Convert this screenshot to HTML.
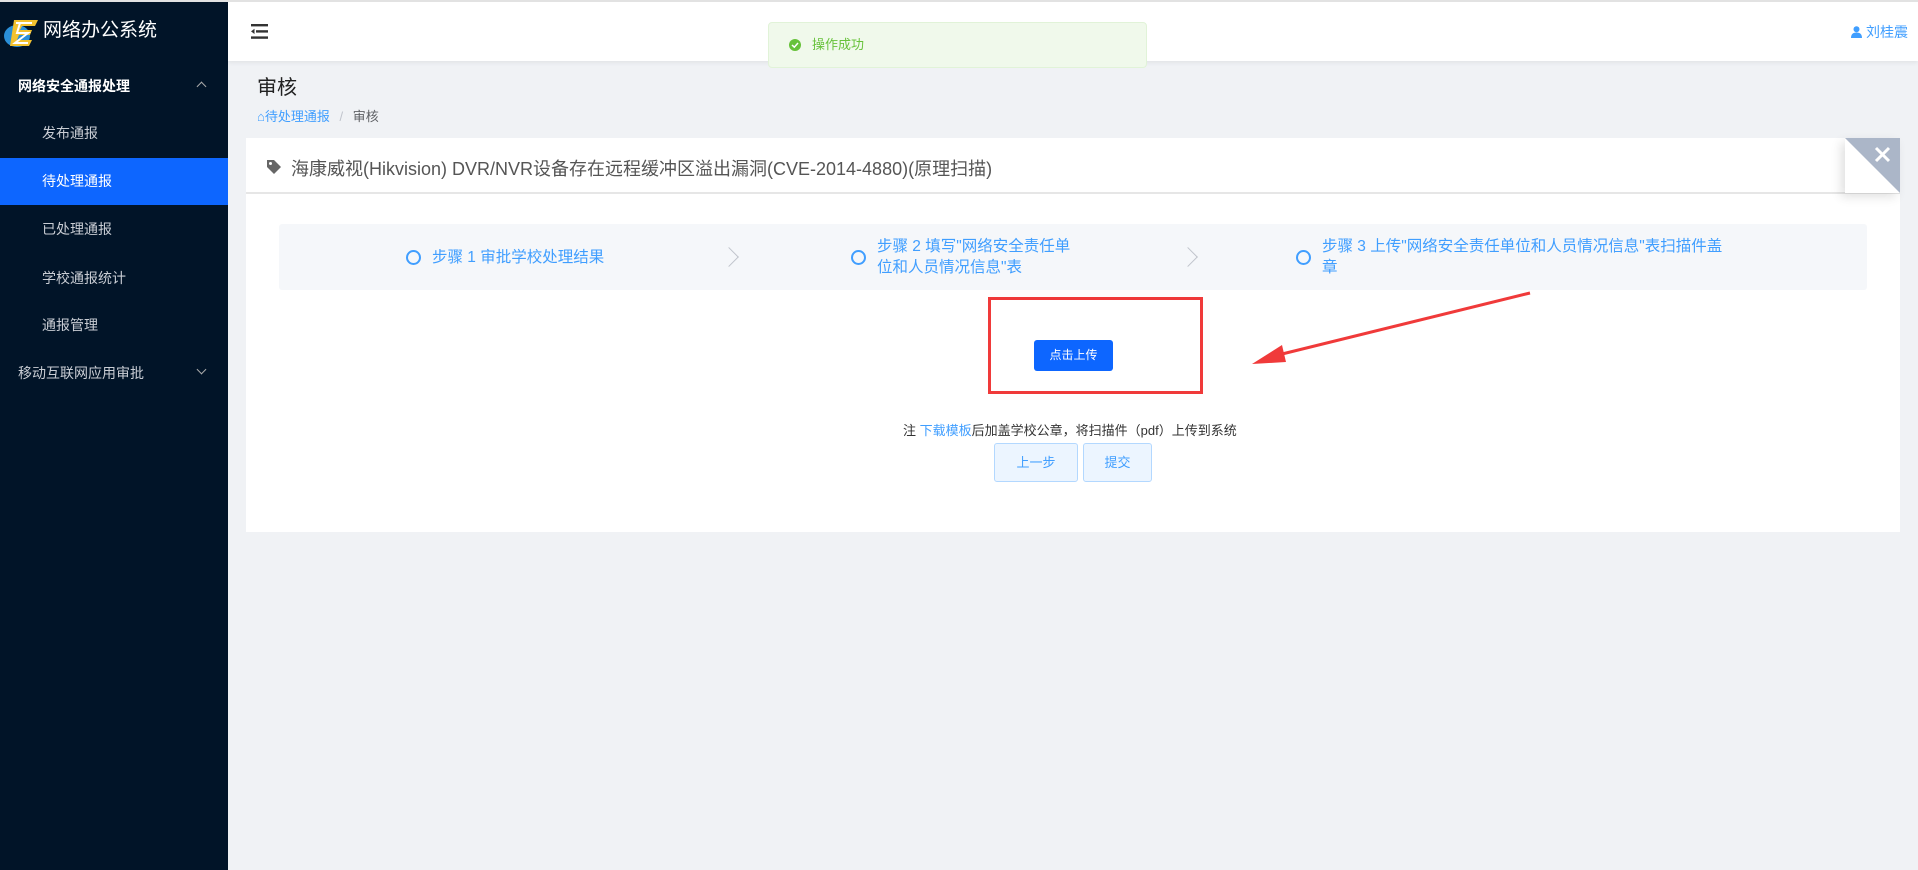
<!DOCTYPE html>
<html><head><meta charset="utf-8"><style>
*{margin:0;padding:0;box-sizing:border-box}
body{width:1918px;height:870px;overflow:hidden;background:#f0f2f5;font-family:"Liberation Sans","Noto Sans CJK SC",sans-serif;position:relative}
.abs{position:absolute}
#top{left:0;top:0;width:1918px;height:2px;background:#e2e2e2;z-index:5}
#side{left:0;top:0;width:228px;height:870px;background:#011428}
.mi{position:absolute;left:42px;color:#c9cdd4;font-size:14px;line-height:20px}
#hdr{left:228px;top:2px;width:1690px;height:59px;background:#fff;box-shadow:0 2px 4px rgba(0,0,0,.06)}
.step{position:absolute;color:#409eff;font-size:15.5px;line-height:21px}
.circ{position:absolute;width:15px;height:15px;border:2px solid #409eff;border-radius:50%}
.chev{position:absolute;width:14px;height:14px;border-right:1px solid #c0c4cc;border-top:1px solid #c0c4cc;transform:rotate(45deg)}
.btn2{position:absolute;top:443px;height:39px;background:#ecf5ff;border:1px solid #b3d8ff;border-radius:3px;color:#409eff;font-size:13px;line-height:37px;text-align:center}
</style></head><body>
<div id="top" class="abs"></div>
<div id="side" class="abs">
  <svg class="abs" style="left:2px;top:14px" width="38" height="36" viewBox="0 0 38 36"><ellipse cx="15" cy="22" rx="13" ry="11" fill="#2a8fd8"/><path d="M12 6 L36 6 L33 12 L20 12 L18 16 L30 16 L28 21 L17 21 L15 26 L30 26 L27 32 L8 32 Z" fill="#f2c230"/><path d="M14 9 L30 9 L18 9 L15 19 L26 19 L13 29 L26 29" stroke="#fff" stroke-width="2" fill="none"/></svg>
  <div class="abs" style="left:43px;top:19px;color:#fff;font-size:19px;line-height:24px">网络办公系统</div>
  <div class="abs" style="left:18px;top:76px;color:#fff;font-size:14px;font-weight:bold;line-height:20px">网络安全通报处理</div>
  <div class="abs" style="left:198px;top:83px;width:7px;height:7px;border-left:1px solid #aaa;border-top:1px solid #aaa;transform:rotate(45deg)"></div>
  <div class="mi" style="top:123px">发布通报</div>
  <div class="abs" style="left:0;top:158px;width:228px;height:47px;background:#0d66ff"></div>
  <div class="mi" style="top:171px;color:#fff">待处理通报</div>
  <div class="mi" style="top:219px">已处理通报</div>
  <div class="mi" style="top:268px">学校通报统计</div>
  <div class="mi" style="top:315px">通报管理</div>
  <div class="mi" style="top:363px;left:18px">移动互联网应用审批</div>
  <div class="abs" style="left:198px;top:366px;width:7px;height:7px;border-right:1px solid #aaa;border-bottom:1px solid #aaa;transform:rotate(45deg)"></div>
</div>
<div id="hdr" class="abs">
  <svg class="abs" style="left:23px;top:22px" width="17" height="15" viewBox="0 0 17 15"><rect x="0" y="0" width="17" height="2.4" fill="#333"/><rect x="5" y="6.2" width="12" height="2.4" fill="#333"/><rect x="0" y="12.4" width="17" height="2.4" fill="#333"/><path d="M0 7.4 L3.5 4.8 L3.5 10 Z" fill="#333"/></svg>
  <div class="abs" style="right:10px;top:21px;color:#409eff;font-size:14px;line-height:18px"><svg width="11" height="12" viewBox="0 0 11 12" style="vertical-align:-1px"><circle cx="5.5" cy="3.3" r="3" fill="#409eff"/><path d="M0 12 Q0 6.5 5.5 6.5 Q11 6.5 11 12Z" fill="#409eff"/></svg> 刘桂震</div>
</div>
<div class="abs" style="left:768px;top:22px;width:379px;height:46px;background:#f0f9eb;border:1px solid #e1f3d8;border-radius:4px;z-index:6">
  <svg class="abs" style="left:20px;top:16px" width="12" height="12" viewBox="0 0 12 12"><circle cx="6" cy="6" r="6" fill="#67c23a"/><path d="M3 6 L5.3 8.2 L9 4" stroke="#fff" stroke-width="1.5" fill="none"/></svg>
  <div class="abs" style="left:43px;top:13px;color:#67c23a;font-size:13px;line-height:18px">操作成功</div>
</div>
<div class="abs" style="left:257px;top:75px;font-size:20px;color:#222;line-height:26px">审核</div>
<div class="abs" style="left:257px;top:108px;font-size:13px;line-height:17px;color:#606266"><span style="color:#409eff">&#8962;待处理通报</span> <span style="color:#c0c4cc;margin:0 6px">/</span> 审核</div>
<div class="abs" style="left:246px;top:138px;width:1654px;height:394px;background:#fff">
  <div class="abs" style="left:0;top:54px;width:1654px;height:2px;background:#e6e6e6"></div>
  <svg class="abs" style="left:20px;top:21px" width="16" height="16" viewBox="0 0 16 16"><path d="M1 1 L8 1 L15 8 L8 15 L1 8 Z" fill="#666"/><circle cx="4.5" cy="4.5" r="1.5" fill="#fff"/></svg>
  <div class="abs" style="left:45px;top:19px;font-size:18px;color:#555;line-height:24px;white-space:nowrap">海康威视(Hikvision) DVR/NVR设备存在远程缓冲区溢出漏洞(CVE-2014-4880)(原理扫描)</div>
  <div class="abs" style="left:1599px;top:0;width:55px;height:55px;background:#fff;box-shadow:-4px 4px 10px rgba(0,0,0,.12)">
    <svg width="55" height="55"><path d="M0 0 L55 0 L55 55 Z" fill="#abb6c8"/><path d="M31 10 L44 23 M44 10 L31 23" stroke="#fff" stroke-width="3"/></svg>
  </div>
  <div class="abs" style="left:33px;top:86px;width:1588px;height:66px;background:#f5f7fa;border-radius:3px"></div>
</div>
<div class="circ" style="left:406px;top:250px"></div>
<div class="step" style="left:432px;top:247px">步骤 1 审批学校处理结果</div>
<div class="chev" style="left:722px;top:250px"></div>
<div class="circ" style="left:851px;top:250px"></div>
<div class="step" style="left:877px;top:236px;width:200px">步骤 2 填写"网络安全责任单位和人员情况信息"表</div>
<div class="chev" style="left:1181px;top:250px"></div>
<div class="circ" style="left:1296px;top:250px"></div>
<div class="step" style="left:1322px;top:236px;width:405px">步骤 3 上传"网络安全责任单位和人员情况信息"表扫描件盖章</div>
<div class="abs" style="left:988px;top:297px;width:215px;height:97px;border:3px solid #f03a3a"></div>
<div class="abs" style="left:1034px;top:340px;width:79px;height:31px;background:#0d66ff;border-radius:3px;color:#fff;font-size:12px;line-height:31px;text-align:center">点击上传</div>
<svg class="abs" style="left:1240px;top:290px" width="300" height="80"><path d="M290 3 L38 65" stroke="#f03a3a" stroke-width="3"/><path d="M12 74 L42 55 L46 72 Z" fill="#f03a3a"/></svg>
<div class="abs" style="left:903px;top:422px;font-size:13px;line-height:18px;color:#333;white-space:nowrap">注 <span style="color:#409eff">下载模板</span>后加盖学校公章，将扫描件（pdf）上传到系统</div>
<div class="btn2" style="left:994px;width:84px">上一步</div>
<div class="btn2" style="left:1083px;width:69px">提交</div>
</body></html>
